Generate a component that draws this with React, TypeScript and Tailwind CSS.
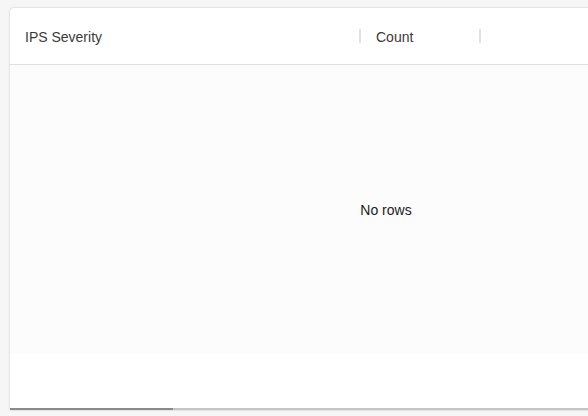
import React from "react";

export default function App() {
  return (
    <div className="w-[588px] h-[416px] overflow-hidden bg-[#f6f6f6] pt-[8px] pl-[10px] font-['Liberation_Sans',Arial,sans-serif] text-[14px] text-[#3a3a3a]">
      <div className="w-[752px] h-[402px] bg-white rounded-tl-[4px] shadow-[0_0_2px_rgba(0,0,0,0.25)] flex flex-col">
        {/* header */}
        <div className="h-[57px] flex items-center border-b border-[#e0e0e0] shrink-0">
          <div className="w-[349px] flex items-center pl-[15px] pt-[2px]">
            <span>IPS Severity</span>
          </div>
          <div className="w-[2px] h-[14px] bg-[#e0e0e0]" />
          <div className="w-[118px] flex items-center pl-[15px] pt-[2px]">
            <span>Count</span>
          </div>
          <div className="w-[2px] h-[14px] bg-[#e0e0e0]" />
        </div>
        {/* body */}
        <div className="h-[289px] bg-[#fcfcfc] flex items-center justify-center shrink-0">
          <span className="pt-[2px] text-[#222]">No rows</span>
        </div>
        <div className="flex-1 bg-white" />
        {/* scrollbar */}
        <div className="h-[2px] bg-[#c4c4c4] flex shrink-0">
          <div className="w-[163px] h-[2px] bg-[#8a8a8a]" />
        </div>
      </div>
    </div>
  );
}
